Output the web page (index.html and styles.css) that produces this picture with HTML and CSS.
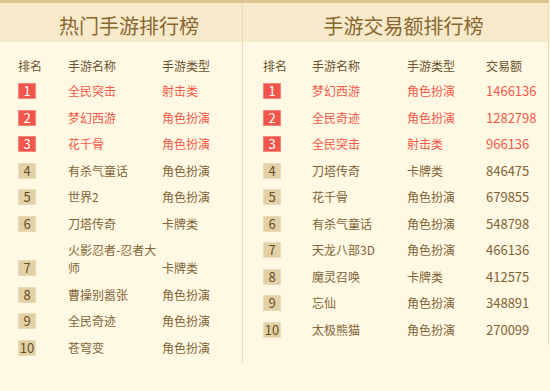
FILE: index.html
```html
<!DOCTYPE html>
<html lang="zh">
<head>
<meta charset="utf-8">
<link rel="stylesheet" href="styles.css">
</head>
<body>
<div class="page">
  <section class="panel panel-hot">
    <h2 class="title">热门手游排行榜</h2>
    <div class="list">
      <div class="row head"><span class="c-rank">排名</span><span class="c-name">手游名称</span><span class="c-type">手游类型</span></div>
      <div class="row top"><span class="c-rank"><i class="badge">1</i></span><span class="c-name">全民突击</span><span class="c-type">射击类</span></div>
      <div class="row top"><span class="c-rank"><i class="badge">2</i></span><span class="c-name">梦幻西游</span><span class="c-type">角色扮演</span></div>
      <div class="row top"><span class="c-rank"><i class="badge">3</i></span><span class="c-name">花千骨</span><span class="c-type">角色扮演</span></div>
      <div class="row"><span class="c-rank"><i class="badge">4</i></span><span class="c-name">有杀气童话</span><span class="c-type">角色扮演</span></div>
      <div class="row"><span class="c-rank"><i class="badge">5</i></span><span class="c-name">世界2</span><span class="c-type">角色扮演</span></div>
      <div class="row"><span class="c-rank"><i class="badge">6</i></span><span class="c-name">刀塔传奇</span><span class="c-type">卡牌类</span></div>
      <div class="row"><span class="c-rank"><i class="badge">7</i></span><span class="c-name">火影忍者-忍者大师</span><span class="c-type">卡牌类</span></div>
      <div class="row"><span class="c-rank"><i class="badge">8</i></span><span class="c-name">曹操别嚣张</span><span class="c-type">角色扮演</span></div>
      <div class="row"><span class="c-rank"><i class="badge">9</i></span><span class="c-name">全民奇迹</span><span class="c-type">角色扮演</span></div>
      <div class="row"><span class="c-rank"><i class="badge">10</i></span><span class="c-name">苍穹变</span><span class="c-type">角色扮演</span></div>
    </div>
  </section>
  <section class="panel panel-trade">
    <h2 class="title">手游交易额排行榜</h2>
    <div class="list">
      <div class="row head"><span class="c-rank">排名</span><span class="c-name">手游名称</span><span class="c-type">手游类型</span><span class="c-amount">交易额</span></div>
      <div class="row top"><span class="c-rank"><i class="badge">1</i></span><span class="c-name">梦幻西游</span><span class="c-type">角色扮演</span><span class="c-amount">1466136</span></div>
      <div class="row top"><span class="c-rank"><i class="badge">2</i></span><span class="c-name">全民奇迹</span><span class="c-type">角色扮演</span><span class="c-amount">1282798</span></div>
      <div class="row top"><span class="c-rank"><i class="badge">3</i></span><span class="c-name">全民突击</span><span class="c-type">射击类</span><span class="c-amount">966136</span></div>
      <div class="row"><span class="c-rank"><i class="badge">4</i></span><span class="c-name">刀塔传奇</span><span class="c-type">卡牌类</span><span class="c-amount">846475</span></div>
      <div class="row"><span class="c-rank"><i class="badge">5</i></span><span class="c-name">花千骨</span><span class="c-type">角色扮演</span><span class="c-amount">679855</span></div>
      <div class="row"><span class="c-rank"><i class="badge">6</i></span><span class="c-name">有杀气童话</span><span class="c-type">角色扮演</span><span class="c-amount">548798</span></div>
      <div class="row"><span class="c-rank"><i class="badge">7</i></span><span class="c-name">天龙八部3D</span><span class="c-type">角色扮演</span><span class="c-amount">466136</span></div>
      <div class="row"><span class="c-rank"><i class="badge">8</i></span><span class="c-name">魔灵召唤</span><span class="c-type">卡牌类</span><span class="c-amount">412575</span></div>
      <div class="row"><span class="c-rank"><i class="badge">9</i></span><span class="c-name">忘仙</span><span class="c-type">角色扮演</span><span class="c-amount">348891</span></div>
      <div class="row"><span class="c-rank"><i class="badge">10</i></span><span class="c-name">太极熊猫</span><span class="c-type">角色扮演</span><span class="c-amount">270099</span></div>
    </div>
  </section>
</div>
</body>
</html>
```

FILE: styles.css
```css
html, body {
  margin: 0;
  padding: 0;
  background: #fff8e2;
}
body {
  font-family: "Noto Sans CJK SC", "Noto Sans", sans-serif;
  color: #7f6438;
}
.page {
  display: flex;
  align-items: flex-start;
  width: 549px;
  border-top: 3px solid #dcc595;
}
.panel {
  border-right: 1px solid #ecdab3;
  box-sizing: border-box;
}
.panel-hot { width: 243px; }
.panel-trade { width: 306px; }

.title {
  margin: 0;
  height: 39px;
  box-sizing: border-box;
  padding: 6px 0 0 16px;
  line-height: 33px;
  text-align: center;
  font-size: 20px;
  font-weight: normal;
  color: #8a6730;
  background: #f6eaca;
}
.list {
  padding: 11px 0 2px;
}
.panel-hot .list { padding-left: 18px; }
.panel-trade .list { padding-left: 20px; }

.row {
  font-size: 0;
  padding: 4.25px 0;
  white-space: nowrap;
}
.row.head { padding: 3.5px 0; }
.row > span {
  display: inline-block;
  vertical-align: baseline;
  font-size: 12px;
  line-height: 18px;
  white-space: normal;
}
.row.head > span { color: #6a5331; }
.row.top .c-name,
.row.top .c-type,
.row.top .c-amount { color: #f3594b; }

.panel-hot .c-rank { width: 50px; }
.panel-hot .c-name { width: 94px; }
.panel-hot .c-type { width: 70px; }

.panel-trade .c-rank { width: 49px; }
.panel-trade .c-name { width: 95px; }
.panel-trade .c-type { width: 79px; }
.panel-trade .c-amount { width: 60px; }
.row .c-amount { font-size: 13px; }
.row.head .c-amount { font-size: 12px; }

.badge {
  display: inline-block;
  width: 18px;
  height: 16px;
  box-sizing: border-box;
  line-height: 14px;
  text-align: center;
  font-style: normal;
  font-size: 13px;
  color: #6a4f24;
  background: #e2d1a7;
  border: 1px solid #eadcb8;
}
.row.top .badge {
  color: #ffffff;
  background: #f2554a;
  border-color: #f6877c;
}
```
